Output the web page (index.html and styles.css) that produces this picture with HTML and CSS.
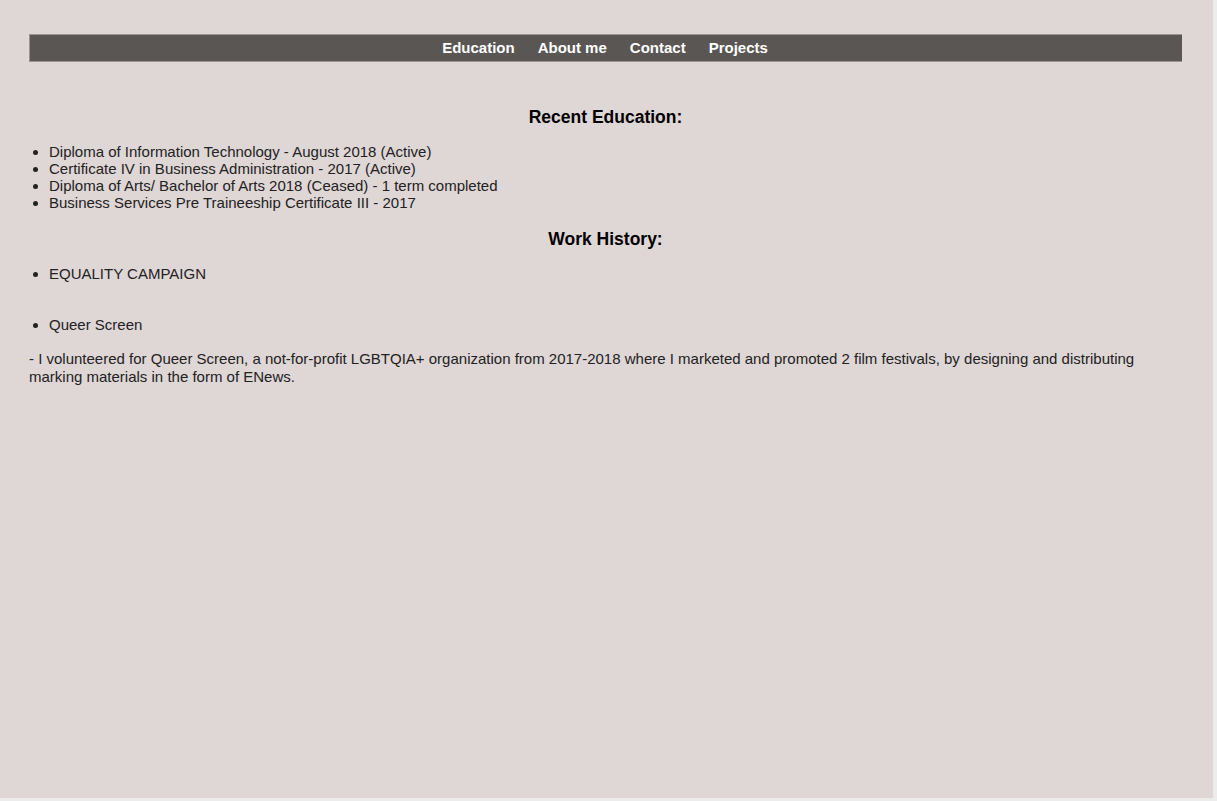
FILE: index.html
```html
<!DOCTYPE html>
<html lang="en">
<head>
<meta charset="utf-8">
<title>Education</title>
<link rel="stylesheet" href="styles.css">
</head>
<body>
<div class="page">
  <nav class="nav">
    <a class="nav-link" href="#">Education</a>
    <a class="nav-link" href="#">About me</a>
    <a class="nav-link" href="#">Contact</a>
    <a class="nav-link" href="#">Projects</a>
  </nav>
  <h2 class="heading heading-first">Recent Education:</h2>
  <ul class="list">
    <li>Diploma of Information Technology - August 2018 (Active)</li>
    <li>Certificate IV in Business Administration - 2017 (Active)</li>
    <li>Diploma of Arts/ Bachelor of Arts 2018 (Ceased) - 1 term completed</li>
    <li>Business Services Pre Traineeship Certificate III - 2017</li>
  </ul>
  <h2 class="heading heading-work">Work History:</h2>
  <ul class="list list-work">
    <li>EQUALITY CAMPAIGN</li>
  </ul>
  <ul class="list list-queer">
    <li>Queer Screen</li>
  </ul>
  <p class="desc">- I volunteered for Queer Screen, a not-for-profit LGBTQIA+ organization from 2017-2018 where I marketed and promoted 2 film festivals, by designing and distributing marking materials in the form of ENews.</p>
</div>
</body>
</html>
```
FILE: styles.css
```css
html {
  background: #ececec;
}
body {
  margin: 0;
  font-family: "Liberation Sans", Arial, sans-serif;
  color: #222;
}
.page {
  width: 1213px;
  height: 798px;
  box-sizing: border-box;
  background: #dfd6d6;
  padding: 34px 31px 0 29px;
}
.nav {
  display: flex;
  justify-content: center;
  background: #5a5654;
  border: 1px solid #9c9292;
  border-right: none;
  height: 24px;
  padding: 0 2px 2px 0;
  align-items: center;
  gap: 23px;
}
.nav-link {
  color: #fff;
  font-weight: bold;
  font-size: 15px;
  text-decoration: none;
}
.heading {
  margin: 0;
  text-align: center;
  font-size: 17.5px;
  line-height: 21px;
  color: #000;
  font-weight: bold;
}
.heading-first {
  margin-top: 45px;
}
.list {
  margin: 15px 0 0;
  padding: 0 0 0 20px;
  font-size: 15px;
  line-height: 17px;
}
.heading-work {
  margin-top: 18px;
}
.list-work {
  margin-top: 15px;
}
.list-queer {
  margin-top: 34px;
}
.desc {
  margin: 17px 0 0;
  font-size: 15px;
  line-height: 18px;
}
```
